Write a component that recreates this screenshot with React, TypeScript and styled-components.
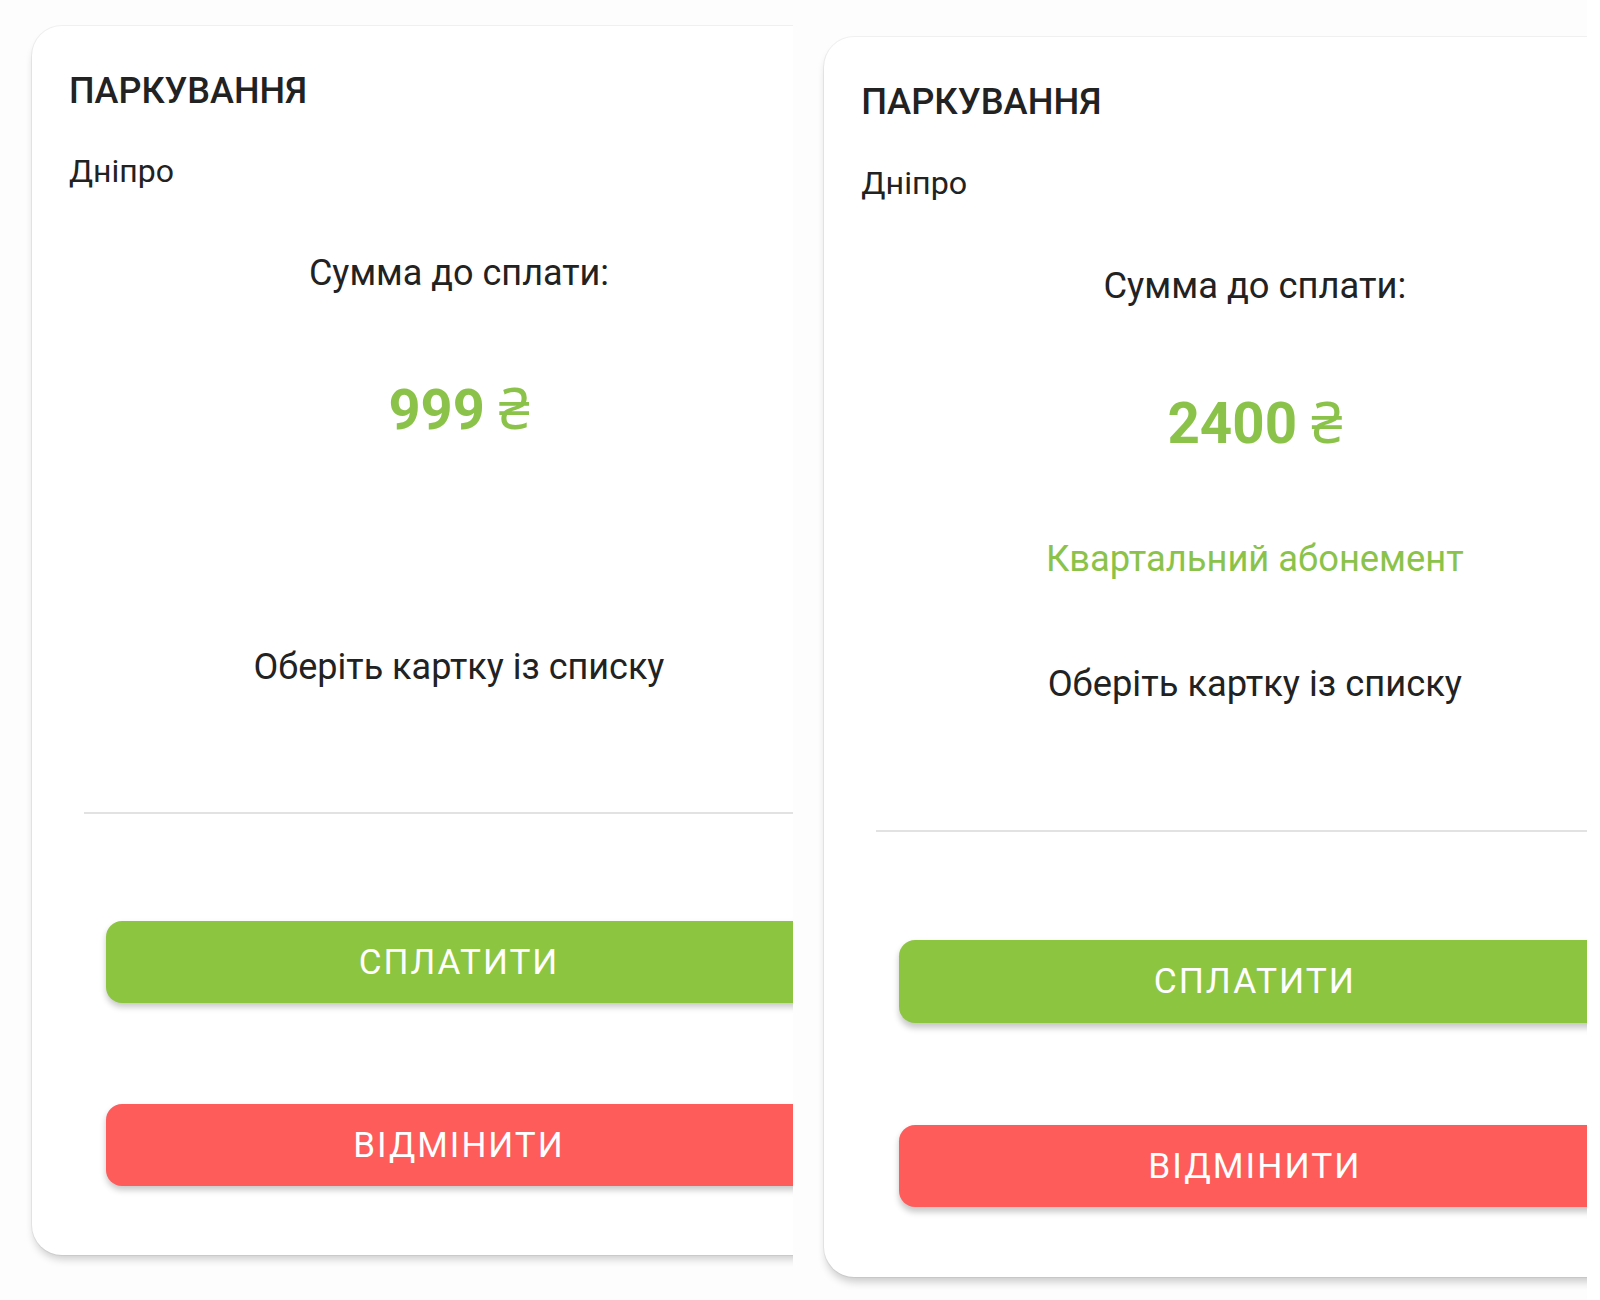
import React from 'react';
import styled, { createGlobalStyle } from 'styled-components';

const GlobalStyle = createGlobalStyle`
  html, body {
    margin: 0;
    padding: 0;
    background: #ffffff;
  }
  body {
    font-family: Roboto, "Noto Sans", "Liberation Sans", sans-serif;
    color: #212121;
  }
`;

const Page = styled.div`
  display: flex;
  width: 1600px;
  height: 1300px;
  overflow: hidden;
  background: #ffffff;
`;

const Panel = styled.div<{ $width: number; $top: number; $left: number }>`
  width: ${(p) => p.$width}px;
  height: 1300px;
  flex-shrink: 0;
  overflow: hidden;
  box-sizing: border-box;
  padding-top: ${(p) => p.$top}px;
  padding-left: ${(p) => p.$left}px;
  background: #fdfdfd;
`;

const Card = styled.div<{ $zoom: number }>`
  zoom: ${(p) => p.$zoom};
  width: 854px;
  box-sizing: border-box;
  background: #ffffff;
  border-radius: 30px;
  padding: 47px 0 69px;
  display: flex;
  flex-direction: column;
  box-shadow: 0 0 0 1px rgba(0, 0, 0, 0.05), 0 6px 8px -2px rgba(0, 0, 0, 0.2);
`;

const Title = styled.div`
  margin-left: 37px;
  font-size: 36px;
  line-height: 36px;
  font-weight: 500;
  color: #222222;
`;

const City = styled.div`
  margin: 46px 0 0 37px;
  font-size: 32px;
  line-height: 33px;
  color: #222222;
`;

const Label = styled.div<{ $gap: number }>`
  margin-top: ${(p) => p.$gap}px;
  text-align: center;
  font-size: 36px;
  line-height: 36px;
  color: #222222;
`;

const Amount = styled.div`
  margin-top: 91px;
  text-align: center;
  font-size: 56px;
  line-height: 56px;
  font-weight: 700;
  color: #8bc34a;
`;

const Currency = styled.span`
  font-weight: 400;
`;

const Subscription = styled.div`
  margin-top: 88px;
  height: 36px;
  text-align: center;
  font-size: 36px;
  line-height: 36px;
  color: #8bc34a;
`;

const Divider = styled.hr`
  margin: 127px 52px 0;
  border: none;
  border-top: 2px solid #e2e2e2;
`;

const Actions = styled.div`
  margin: 107px 74px 0;
  display: flex;
  flex-direction: column;
  gap: 101px;
`;

const Button = styled.button<{ $color: string }>`
  height: 82px;
  border: none;
  border-radius: 16px;
  background: ${(p) => p.$color};
  color: #ffffff;
  font-family: Roboto, "Noto Sans", "Liberation Sans", sans-serif;
  font-size: 35px;
  font-weight: 400;
  letter-spacing: 2px;
  text-transform: uppercase;
  box-shadow: 0 4px 6px rgba(0, 0, 0, 0.22);
  cursor: pointer;
`;

type PaymentProps = {
  amount: string;
  subscription?: string;
  zoom?: number;
};

const PaymentCard = ({ amount, subscription, zoom = 1 }: PaymentProps) => (
  <Card $zoom={zoom}>
    <Title>ПАРКУВАННЯ</Title>
    <City>Дніпро</City>
    <Label $gap={67}>Сумма до сплати:</Label>
    <Amount>
      {amount} <Currency>₴</Currency>
    </Amount>
    <Subscription>{subscription}</Subscription>
    <Label $gap={87}>Оберіть картку із списку</Label>
    <Divider />
    <Actions>
      <Button $color="#8cc540">Сплатити</Button>
      <Button $color="#fe5b5b">Відмінити</Button>
    </Actions>
  </Card>
);

export default function App() {
  return (
    <>
      <GlobalStyle />
      <Page>
        <Panel $width={793} $top={26} $left={32}>
          <PaymentCard amount="999" />
        </Panel>
        <Panel $width={794} $top={37} $left={31}>
          <PaymentCard amount="2400" subscription="Квартальний абонемент" zoom={1.009} />
        </Panel>
      </Page>
    </>
  );
}
